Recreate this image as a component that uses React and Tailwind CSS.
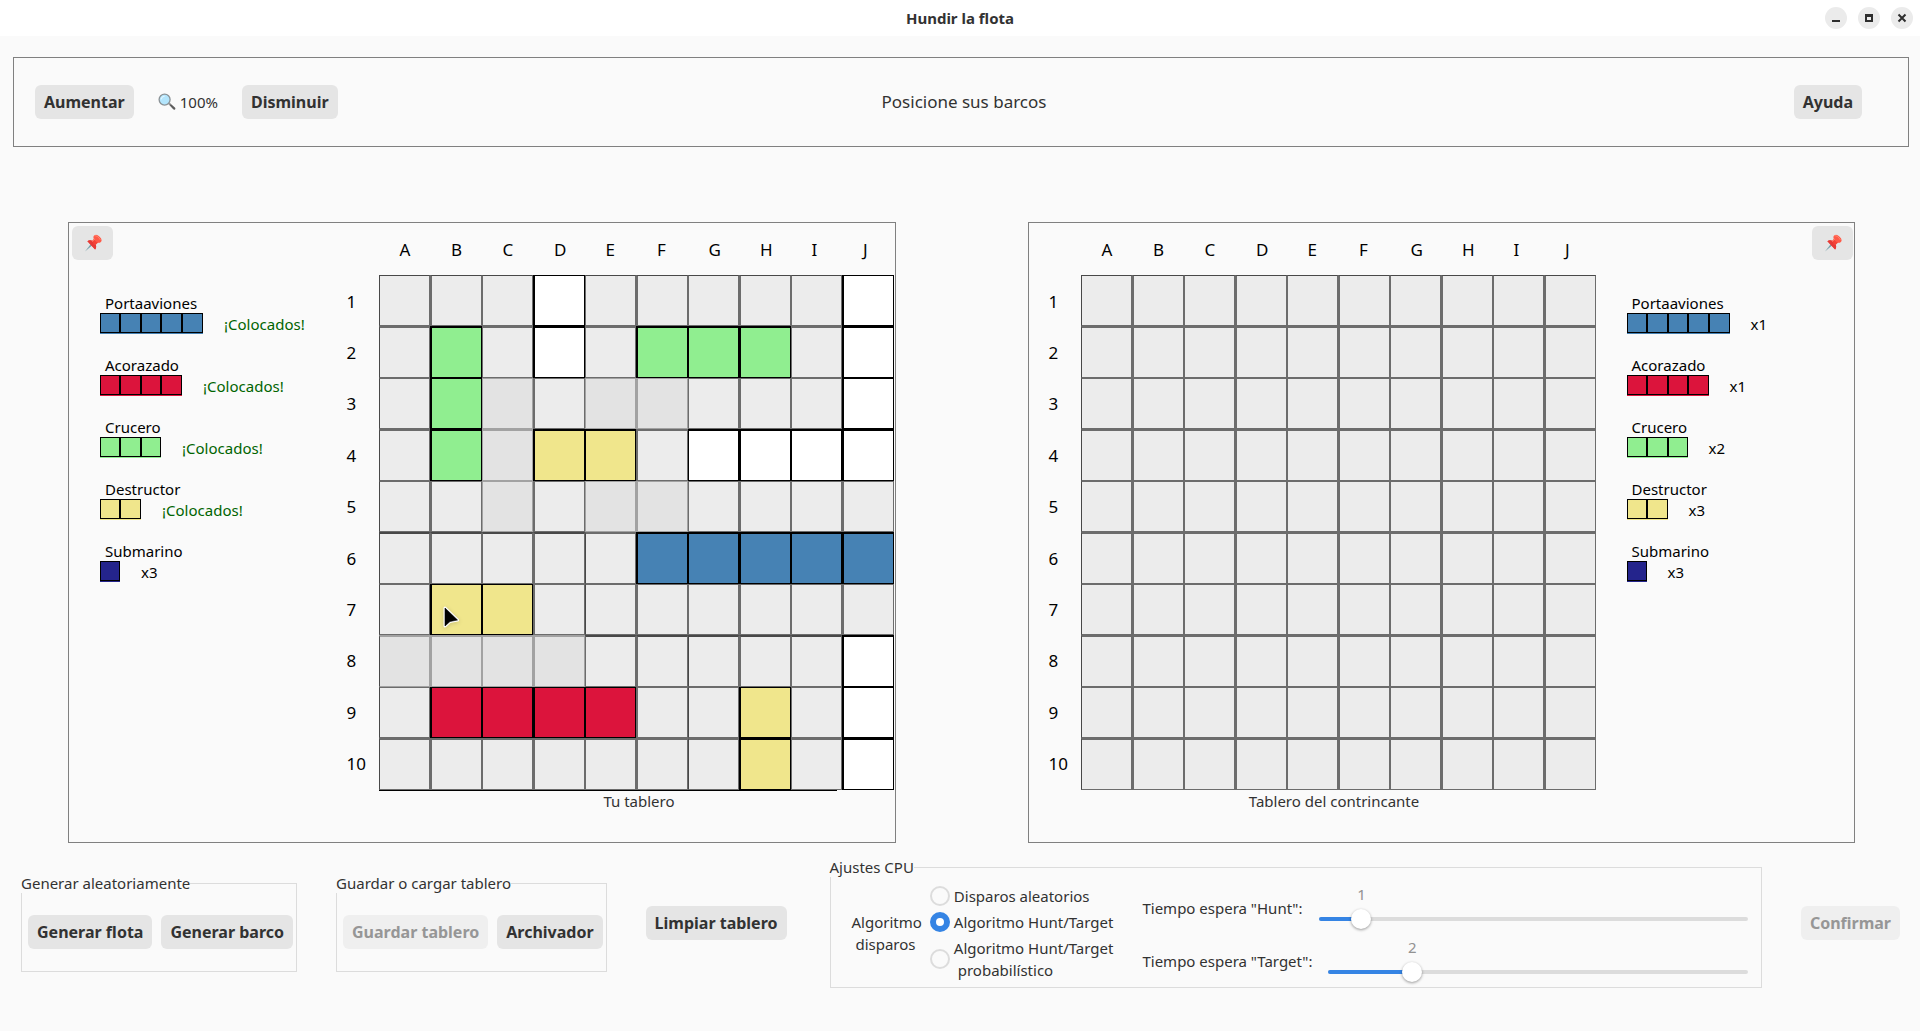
import React, { useState } from "react";

const COLUMNS = ["A", "B", "C", "D", "E", "F", "G", "H", "I", "J"];

const OWN_FLEET = [
  "...w.....w",
  ".c.w.ccc.w",
  ".cl.ll...w",
  ".cldd.wwww",
  "..l.ll....",
  ".....ppppp",
  ".dd.......",
  "llll.....w",
  ".aaaa..d.w",
  ".......d.w",
];

const EMPTY_FLEET = Array(10).fill("..........");

const CELL_STYLES = {
  ".": "bg-[#ececec] border-[#6c6c6c]",
  l: "bg-[#e3e3e3] border-[#a2a2a2]",
  w: "bg-white border-black",
  p: "bg-[#4682b4] border-black",
  a: "bg-[#dc143c] border-black",
  c: "bg-[#90ee90] border-black",
  d: "bg-[#f0e68c] border-black",
};

const DARK_TOP = ["A6", "B6", "C6", "D6", "E8", "F8", "G8", "H8", "I8"];
const DARK_LEFT = ["E6", "E7", "G8", "G9", "G10"];

const SHIPS = [
  { name: "Portaaviones", size: 5, color: "bg-[#4682b4]", left: "x1", placed: true },
  { name: "Acorazado", size: 4, color: "bg-[#dc143c]", left: "x1", placed: true },
  { name: "Crucero", size: 3, color: "bg-[#90ee90]", left: "x2", placed: true },
  { name: "Destructor", size: 2, color: "bg-[#f0e68c]", left: "x3", placed: true },
  { name: "Submarino", size: 1, color: "bg-[#24248c]", left: "x3", placed: false },
];

function Button({ children, disabled, ...rest }) {
  return (
    <button
      type="button"
      disabled={disabled}
      className="h-[34px] shrink-0 rounded-md bg-[#e5e5e5] px-[9px] text-base font-bold whitespace-nowrap text-[#323232] disabled:bg-[#efefef] disabled:text-[#969696]"
      {...rest}
    >
      {children}
    </button>
  );
}

function MagnifierIcon() {
  return (
    <svg viewBox="0 0 18 18" className="size-[18px]" aria-hidden="true">
      <path d="M10.6 11.2l1.2-1.2 5.1 4.6c.7.7.6 1.3.1 1.8s-1.2.5-1.8-.1z" fill="#5d5d5d" />
      <path d="M10.3 10.8l.9-.9 1.6 1.5-.9.9z" fill="#9a9a9a" />
      <circle cx="6.6" cy="6.6" r="5.5" fill="#b3e5fc" stroke="#8b9296" strokeWidth="1.3" />
      <path d="M3.2 6c.3-1.5 1.5-2.6 3-2.8" fill="none" stroke="#e6f7ff" strokeWidth="1.1" strokeLinecap="round" />
    </svg>
  );
}

function PinIcon() {
  return (
    <svg viewBox="0 0 18 18" className="size-[18px]" aria-hidden="true">
      <path d="M7.2 9.6l1.5 1.4L1 17.4z" fill="#78a3ad" />
      <path d="M3.4 7.2c1.5-1.3 3.4-1.2 4.8-.5l3-3.1 4 3.9-3.4 3.2c.6 1.6.4 3.5-.7 4.8z" fill="#f44336" />
      <path d="M3.4 7.2c1.5-1.3 3.4-1.2 4.8-.5l1.7 4.4 1.9-.4c.6 1.6.4 3.5-.7 4.8z" fill="#e53935" />
      <ellipse cx="13.5" cy="4.8" rx="4.6" ry="3" transform="rotate(44 13.5 4.8)" fill="#ff5a48" />
      <path d="M10.7 1.6c1.8-.2 4.2 1.5 5.5 4" fill="none" stroke="#ff8a75" strokeWidth=".9" strokeLinecap="round" />
      <path d="M8.4 7.3l2.3-2.2" stroke="#ff8a75" strokeWidth=".9" strokeLinecap="round" />
    </svg>
  );
}

function PinButton() {
  return (
    <button
      type="button"
      aria-label="Fijar panel"
      className="flex h-[34px] w-[41px] items-center justify-center rounded-md bg-[#e5e5e5]"
    >
      <PinIcon />
    </button>
  );
}

function WindowButton({ label, children }) {
  return (
    <button
      type="button"
      aria-label={label}
      className="flex size-[22px] items-center justify-center rounded-full bg-[#ebebeb]"
    >
      <svg viewBox="0 0 10 10" className="size-[10px]" fill="none" stroke="#2e2e2e" strokeWidth="2">
        {children}
      </svg>
    </button>
  );
}

function TitleBar() {
  return (
    <header className="grid h-9 grid-cols-[1fr_auto_1fr] items-center bg-white">
      <h1 className="col-start-2 font-bold">Hundir la flota</h1>
      <div className="flex justify-end gap-[11px] pr-[7px]">
        <WindowButton label="Minimizar">
          <path d="M1 8h8" />
        </WindowButton>
        <WindowButton label="Maximizar">
          <rect x="2" y="2" width="6" height="6" />
          <path d="M1 2.5h8" strokeWidth="3" />
        </WindowButton>
        <WindowButton label="Cerrar">
          <path d="M1.5 1.5l7 7M8.5 1.5l-7 7" />
        </WindowButton>
      </div>
    </header>
  );
}

function Toolbar() {
  return (
    <section className="mt-[21px] mr-[11px] ml-[13px] grid h-[90px] grid-cols-[1fr_auto_1fr] items-center border border-[#808080]">
      <div className="flex items-center gap-6 pl-[21px]">
        <Button>Aumentar</Button>
        <span className="flex items-center gap-1">
          <MagnifierIcon />
          100%
        </span>
        <Button>Disminuir</Button>
      </div>
      <p className="pl-1.5 text-[17px]">Posicione sus barcos</p>
      <div className="flex justify-end pr-[46px]">
        <Button>Ayuda</Button>
      </div>
    </section>
  );
}

function Legend({ showPlaced }) {
  return (
    <ul className="flex flex-col gap-5 pt-[33px] pl-[31px] text-black">
      {SHIPS.map((ship) => (
        <li key={ship.name}>
          <div className="pl-[5px] leading-5">{ship.name}</div>
          <div className="flex h-[22px] items-start gap-[21px]">
            <div className={`flex pb-px ${ship.color}`}>
              {Array.from({ length: ship.size }, (_, i) => (
                <span key={i} className="h-5 w-5 border border-black even:w-[21px] nth-[5]:w-[21px]" />
              ))}
            </div>
            {showPlaced && ship.placed ? (
              <span className="leading-[22px] text-[#006400]">¡Colocados!</span>
            ) : (
              <span className="leading-[22px]">{ship.left}</span>
            )}
          </div>
        </li>
      ))}
    </ul>
  );
}

function Cell({ kind, row, col, own }) {
  const name = COLUMNS[col] + (row + 1);
  const gray = kind === "." || kind === "l";
  const darkTop = gray && (row === 0 || (own && DARK_TOP.includes(name)));
  const darkLeft = gray && (col === 0 || (own && DARK_LEFT.includes(name)));
  return (
    <div
      title={name}
      className={[
        "relative border",
        CELL_STYLES[kind],
        col % 2 ? "border-l-2" : "",
        row % 2 ? "border-t-2" : "",
        darkTop ? "border-t-[#484848]" : "",
        darkLeft ? "border-l-[#484848]" : "",
      ].join(" ")}
    >
      {own && name === "B7" && <Pointer />}
    </div>
  );
}

function Pointer() {
  return (
    <svg viewBox="0 0 18 24" className="absolute top-5 left-2.5 h-6 w-[18px] drop-shadow-sm" aria-hidden="true">
      <path d="M3 3v18l5-4.5 7.5-1.5z" fill="#000" stroke="#fff" strokeWidth="3" strokeLinejoin="round" />
      <path d="M3 3v18l5-4.5 7.5-1.5z" fill="#000" stroke="#000" strokeWidth=".6" />
    </svg>
  );
}

function Board({ fleet, own, caption, captionClass }) {
  return (
    <div className="grid grid-cols-[32px_515px]">
      <div className="col-start-2 grid h-[52px] grid-cols-10 items-center pt-px text-[17px] text-black">
        {COLUMNS.map((c) => (
          <span key={c} className="pl-[21px]">
            {c}
          </span>
        ))}
      </div>
      <div className="grid grid-rows-10 items-center pt-px text-[17px] text-black">
        {fleet.map((_, i) => (
          <span key={i}>{i + 1}</span>
        ))}
      </div>
      <div className="grid aspect-square grid-cols-[repeat(5,51fr_52fr)] grid-rows-[repeat(5,51fr_52fr)]">
        {fleet.map((line, r) =>
          line.split("").map((kind, c) => <Cell key={c + "-" + r} kind={kind} row={r} col={c} own={own} />)
        )}
      </div>
      <div className={`col-start-2 h-px w-[89%] ${own ? "bg-black" : ""}`} />
      <p className={`col-start-2 text-center leading-5 ${captionClass}`}>{caption}</p>
    </div>
  );
}

function Radio({ label, value, current, onChange }) {
  return (
    <label className="flex items-center gap-1">
      <input
        type="radio"
        name="algoritmo"
        value={value}
        checked={current === value}
        onChange={() => onChange(value)}
        className="size-5 shrink-0 appearance-none rounded-full border-2 border-[#dcdcdc] bg-[#fafafa] checked:border-[6px] checked:border-[#3584e4] checked:bg-white"
      />
      <span className="whitespace-pre">{label}</span>
    </label>
  );
}

function Slider({ id, label, initial }) {
  const [value, setValue] = useState(initial);
  const percent = value * 10;
  return (
    <div className="flex items-start gap-4">
      <label htmlFor={id} className="pt-[14px] whitespace-nowrap">
        {label}
      </label>
      <div className="flex-1">
        <output
          htmlFor={id}
          className="block w-5 text-center text-[#929292]"
          style={{ marginLeft: `calc(${percent}% - 10px)` }}
        >
          {value}
        </output>
        <div className="relative mt-1 flex h-5 items-center">
          <div className="h-1 flex-1 rounded-full bg-[#dcdcdc]">
            <div className="h-1 rounded-full bg-[#3584e4]" style={{ width: `${percent}%` }} />
          </div>
          <input
            id={id}
            type="range"
            min="0"
            max="10"
            value={value}
            onChange={(e) => setValue(Number(e.target.value))}
            className="absolute -inset-x-2.5 top-0 h-5 appearance-none bg-transparent [&::-webkit-slider-thumb]:size-5 [&::-webkit-slider-thumb]:appearance-none [&::-webkit-slider-thumb]:rounded-full [&::-webkit-slider-thumb]:bg-white [&::-webkit-slider-thumb]:shadow-[0_1px_3px_rgba(0,0,0,0.4)]"
          />
        </div>
      </div>
    </div>
  );
}

function Group({ title, className = "", children }) {
  return (
    <fieldset className={`border border-[#dcdcdc] ${className}`}>
      <legend className="-ml-px bg-[#fafafa] leading-5">{title}</legend>
      {children}
    </fieldset>
  );
}

function Controls() {
  const [algorithm, setAlgorithm] = useState("hunt");
  return (
    <section className="flex items-center gap-[39px] pt-[14px] pr-5 pl-[21px]">
      <Group title="Generar aleatoriamente">
        <div className="flex gap-[9px] pt-[22px] pr-[3px] pb-[22px] pl-1.5">
          <Button>Generar flota</Button>
          <Button>Generar barco</Button>
        </div>
      </Group>
      <Group title="Guardar o cargar tablero">
        <div className="flex gap-[9px] pt-[22px] pr-[3px] pb-[22px] pl-1.5">
          <Button disabled>Guardar tablero</Button>
          <Button>Archivador</Button>
        </div>
      </Group>
      <Button>Limpiar tablero</Button>
      <Group title="Ajustes CPU" className="ml-1 flex-1">
        <div className="flex items-center pt-1.5 pr-[13px] pb-[5px] pl-[21px]">
          <span id="algoritmo-label" className="whitespace-pre">
            {"Algoritmo\n disparos"}
          </span>
          <div role="radiogroup" aria-labelledby="algoritmo-label" className="ml-2 flex flex-col gap-1">
            <Radio label="Disparos aleatorios" value="random" current={algorithm} onChange={setAlgorithm} />
            <Radio label="Algoritmo Hunt/Target" value="hunt" current={algorithm} onChange={setAlgorithm} />
            <Radio
              label={"Algoritmo Hunt/Target\n probabilístico"}
              value="probabilistic"
              current={algorithm}
              onChange={setAlgorithm}
            />
          </div>
          <div className="ml-[29px] flex flex-1 flex-col gap-[7px]">
            <Slider id="hunt" label={'Tiempo espera "Hunt":'} initial={1} />
            <Slider id="target" label={'Tiempo espera "Target":'} initial={2} />
          </div>
        </div>
      </Group>
      <Button disabled>Confirmar</Button>
    </section>
  );
}

export default function App() {
  return (
    <div className="min-h-screen bg-[#fafafa] font-['Noto_Sans',sans-serif] text-[15px] leading-[22px] text-[#323232]">
      <TitleBar />
      <Toolbar />
      <main className="grid grid-cols-2 gap-[132px] pt-[75px] pr-[65px] pl-[68px]">
        <section className="flex justify-between border border-[#808080] pb-[31px]">
          <div>
            <div className="flex pt-[3px] pl-[3px]">
              <PinButton />
            </div>
            <Legend showPlaced />
          </div>
          <div className="pr-px">
            <Board own fleet={OWN_FLEET} caption="Tu tablero" captionClass="pl-1.5" />
          </div>
        </section>
        <section className="flex justify-between border border-[#808080] pb-[31px] pl-5">
          <Board fleet={EMPTY_FLEET} caption="Tablero del contrincante" captionClass="pr-2" />
          <div className="flex-1">
            <div className="flex justify-end pt-[3px] pr-px">
              <PinButton />
            </div>
            <Legend />
          </div>
        </section>
      </main>
      <Controls />
    </div>
  );
}
